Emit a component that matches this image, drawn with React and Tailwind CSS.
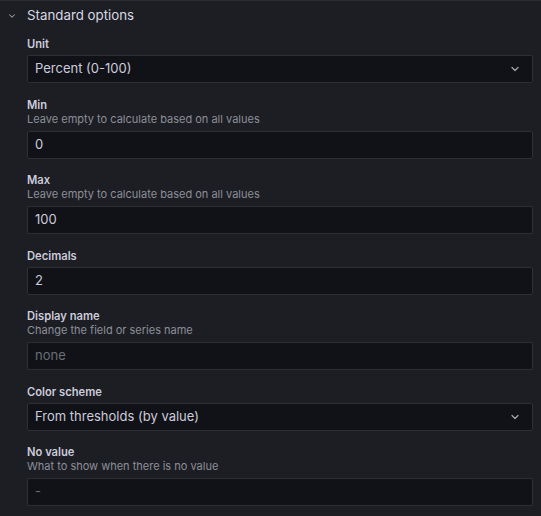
import { ChevronDown } from "lucide-react";

const fields = [
  { label: "Unit", select: true, value: "Percent (0-100)" },
  { label: "Min", description: "Leave empty to calculate based on all values", value: "0" },
  { label: "Max", description: "Leave empty to calculate based on all values", value: "100" },
  { label: "Decimals", value: "2" },
  { label: "Display name", description: "Change the field or series name", placeholder: "none" },
  { label: "Color scheme", select: true, value: "From thresholds (by value)" },
  { label: "No value", description: "What to show when there is no value", placeholder: "-" },
];

function Field({ label, description, value, placeholder, select }) {
  return (
    <div className="mb-[14.5px]">
      <div className="text-[11.2px] font-semibold leading-[14px] text-[#ccccdc]">{label}</div>
      {description && (
        <div className="text-[11px] leading-[15px] text-[#8d8e99]">{description}</div>
      )}
      <div className="mt-[4px] flex h-[28px] items-center rounded-[2px] border border-[#2d2f35] bg-[#111217] pl-[7px] pr-[11px]">
        <span className={`flex-1 text-[13px] ${value ? "text-[#ccccdc]" : "text-[#6c6d76]"}`}>
          {value || placeholder}
        </span>
        {select && <ChevronDown size={12} strokeWidth={2.5} className="text-[#a3a4ac]" />}
      </div>
    </div>
  );
}

export default function App() {
  return (
    <div className="h-[516px] w-[541px] overflow-hidden border-t border-[#2a2c32] bg-[#1c1e23] font-['Inter',sans-serif]">
      <div className="flex h-[29px] items-center pt-[1px]">
        <div className="flex w-[24px] justify-center">
          <ChevronDown size={10} strokeWidth={2.5} className="text-[#9a9ba3]" />
        </div>
        <span className="ml-[3px] text-[13.3px] text-[#d8d8e4]">Standard options</span>
      </div>
      <div className="pl-[27px] pr-[8px] pt-[7px]">
        {fields.map((f) => (
          <Field key={f.label} {...f} />
        ))}
      </div>
    </div>
  );
}
